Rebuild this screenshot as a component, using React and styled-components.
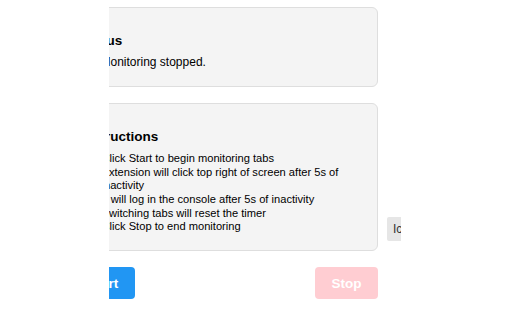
import React from "react";
import styled, { createGlobalStyle } from "styled-components";

const steps = [
    "Click Start to begin monitoring tabs",
    "Extension will click top right of screen after 5s of inactivity",
    "It will log in the console after 5s of inactivity",
    "Switching tabs will reset the timer",
    "Click Stop to end monitoring",
];

const App = () => <>
    <GlobalStyle />
    <Viewport>
        <Popup>
            <Card>
                <CardTitle>Status</CardTitle>
                <StatusText>
                    <StatusDot />
                    Monitoring stopped.
                </StatusText>
            </Card>
            <Card>
                <CardTitle>Instructions</CardTitle>
                <Steps>
                    {steps.map(step => <li key={step}>{step}</li>)}
                </Steps>
            </Card>
            <Actions>
                <Button $variant="start">Start</Button>
                <Button $variant="stop" disabled>Stop</Button>
            </Actions>
        </Popup>
        <Tooltip>Icon clicked</Tooltip>
    </Viewport>
</>;

export default App;

const GlobalStyle = createGlobalStyle`
    html, body {
        margin: 0;
        background: #fff;
    }

    body {
        font-family: "Liberation Sans", Arial, Helvetica, sans-serif;
        color: #000;
    }
`;

const Viewport = styled.div`
    position: relative;
    width: 292px;
    height: 320px;
    margin-left: 109px;
    overflow: hidden;
`;

const Popup = styled.main`
    width: 307px;
    margin-left: -38px;
    padding-top: 7px;
    display: flex;
    flex-direction: column;
    gap: 16px;
`;

const Card = styled.section`
    background: #f4f4f4;
    border: 1px solid #dedede;
    border-radius: 6px;
    padding: 12px 10px 12px 9px;
`;

const CardTitle = styled.h3`
    margin: 13px 0 8px;
    font-size: 13.5px;
    line-height: 15px;
    font-weight: bold;
`;

const StatusText = styled.p`
    display: flex;
    align-items: center;
    gap: 9.5px;
    margin: 0 0 4.5px;
    font-size: 12px;
    line-height: 13.8px;
`;

const StatusDot = styled.span`
    flex: none;
    width: 10px;
    height: 10px;
    border-radius: 50%;
    background: ${p => p.$active ? "#4caf50" : "#f44336"};
`;

const Steps = styled.ol`
    margin: 0 0 4.5px;
    padding-left: 20.5px;
    font-size: 11.13px;
    line-height: 13.6px;
`;

const Actions = styled.div`
    display: flex;
    justify-content: space-between;
`;

const Button = styled.button`
    height: 32px;
    padding: 0 16.5px;
    border: none;
    border-radius: 4px;
    font-family: inherit;
    font-size: 13.5px;
    font-weight: bold;
    color: #fff;
    background: ${p => p.$variant === "stop" ? "#f44336" : "#2196f3"};
    cursor: pointer;

    &:disabled {
        background: #ffcdd2;
        cursor: default;
    }
`;

const Tooltip = styled.div`
    position: absolute;
    left: 278px;
    top: 217px;
    height: 24px;
    padding: 0 6px;
    background: #e6e6e6;
    border-radius: 2px;
    font-size: 12px;
    line-height: 24px;
    color: #333;
    white-space: nowrap;
`;
